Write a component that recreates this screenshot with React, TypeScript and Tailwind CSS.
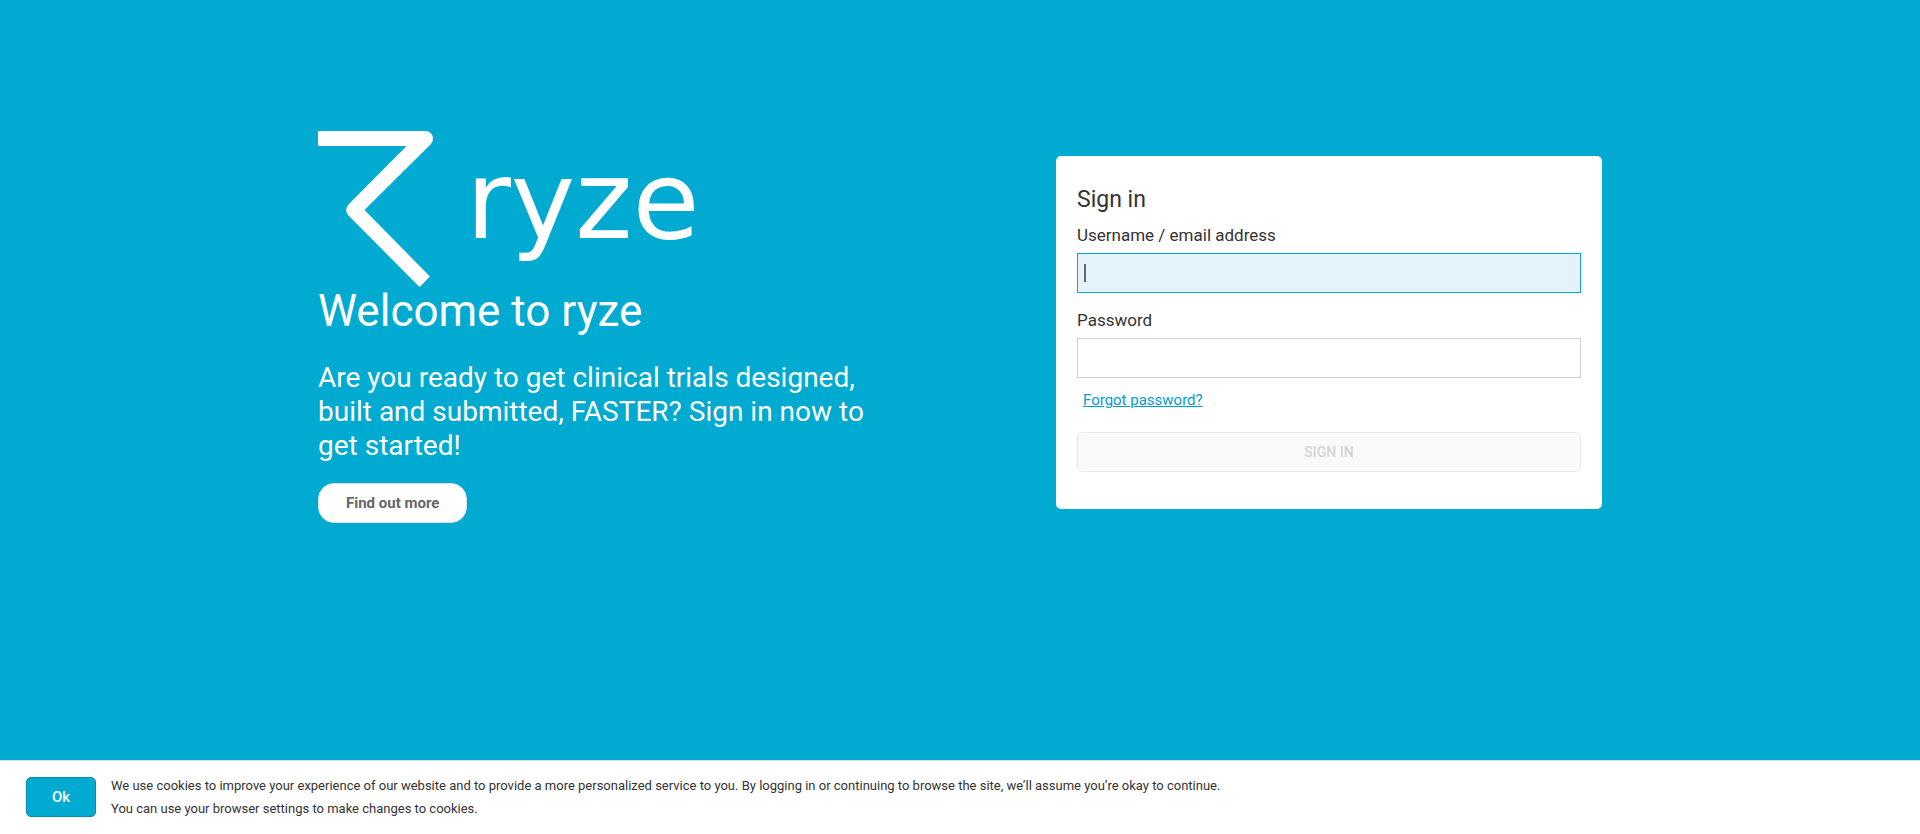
import { useState } from "react";

function RyzeLogo() {
  return (
    <div className="flex items-start" role="img" aria-label="ryze">
      <svg className="h-[156px] w-[116px] shrink-0" viewBox="0 0 116 156" fill="none" aria-hidden="true">
        <path
          d="M0 0H107C114.500 0 117.500 8 112.500 13.500L46.500 79L112 145.500L101.500 156L30.500 84.500C27.500 81 27.500 77 30.500 73.500L88.500 15H0Z"
          fill="#ffffff"
        />
      </svg>
      <span className="ml-8 mt-[14px] font-['DejaVu_Sans',sans-serif] text-[109px] leading-[112px] font-normal text-white">
        ryze
      </span>
    </div>
  );
}

type FieldProps = {
  id: string;
  label: string;
  type: string;
  value: string;
  onChange: (value: string) => void;
  active?: boolean;
};

function Field({ id, label, type, value, onChange, active = false }: FieldProps) {
  return (
    <div>
      <label htmlFor={id} className="block pb-1.5 text-[17px] leading-[23px]">
        {label}
      </label>
      <div className="relative">
        <input
          id={id}
          type={type}
          value={value}
          onChange={(event) => onChange(event.target.value)}
          className={
            active
              ? "block h-10 w-full border border-[#00aad0] bg-[#e4f3f9] px-1.5 text-base outline-none"
              : "block h-10 w-full border border-[#d0d0d0] bg-white px-1.5 text-base outline-none"
          }
        />
        {active && value === "" && (
          <span className="pointer-events-none absolute top-[11px] left-[7px] h-[18px] w-0.5 bg-[#666666]" />
        )}
      </div>
    </div>
  );
}

export default function App() {
  const [username, setUsername] = useState("");
  const [password, setPassword] = useState("");
  const [cookiesOpen, setCookiesOpen] = useState(true);

  return (
    <div className="flex min-h-screen flex-col bg-[#00aad0] font-[Roboto,sans-serif] text-[#333333]">
      <main className="mx-auto grid w-full max-w-[1284px] grow grid-cols-2 items-start gap-48 pt-[131px]">
        <section className="-mr-3 text-white">
          <RyzeLogo />
          <h1 className="text-[44px] leading-[48px]">Welcome to ryze</h1>
          <p className="mt-[26px] text-[28px] leading-[34px]">
            Are you ready to get clinical trials designed, built and submitted, FASTER? Sign in now to get started!
          </p>
          <button
            type="button"
            className="mt-5 h-10 rounded-2xl border border-[#dddddd] bg-white px-[27px] text-[15px] font-bold text-[#666666]"
          >
            Find out more
          </button>
        </section>

        <form
          className="mt-[25px] rounded-[5px] bg-white px-[21px] pt-7 pb-[37px]"
          onSubmit={(event) => event.preventDefault()}
        >
          <h2 className="pb-2 text-[23px] leading-8">Sign in</h2>
          <Field id="username" label="Username / email address" type="text" value={username} onChange={setUsername} active />
          <div className="mt-4">
            <Field id="password" label="Password" type="password" value={password} onChange={setPassword} />
          </div>
          <a href="#forgot" className="mt-3 ml-1.5 inline-block text-[15px] leading-5 text-[#00a0cc] underline">
            Forgot password?
          </a>
          <button
            type="submit"
            disabled={!username || !password}
            className="mt-5 block h-10 w-full rounded-[5px] border border-[#ebebeb] bg-[#fafafa] text-[14px] font-medium text-[#d4d4d4]"
          >
            SIGN IN
          </button>
        </form>
      </main>

      {cookiesOpen && (
        <footer className="flex items-start gap-[15px] border-t border-[#dddddd] bg-white px-[26px] pt-4 pb-[14px]">
          <button
            type="button"
            onClick={() => setCookiesOpen(false)}
            className="h-10 w-[70px] shrink-0 rounded-[5px] border border-[#008fb3] bg-[#00aad0] text-[15px] font-medium text-white"
          >
            Ok
          </button>
          <p className="-mt-[3px] text-[13px] leading-[23px]">
            We use cookies to improve your experience of our website and to provide a more personalized service to you. By
            logging in or continuing to browse the site, we’ll assume you’re okay to continue.
            <br />
            You can use your browser settings to make changes to cookies.
          </p>
        </footer>
      )}
    </div>
  );
}
